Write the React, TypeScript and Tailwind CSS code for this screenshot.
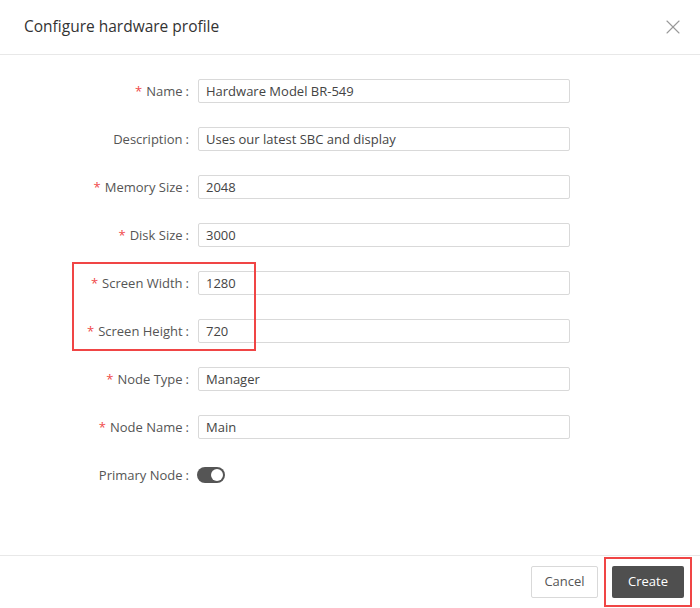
import { X } from "lucide-react";

const fields = [
  { label: "Name", value: "Hardware Model BR-549", required: true },
  { label: "Description", value: "Uses our latest SBC and display", required: false },
  { label: "Memory Size", value: "2048", required: true },
  { label: "Disk Size", value: "3000", required: true },
  { label: "Screen Width", value: "1280", required: true },
  { label: "Screen Height", value: "720", required: true },
  { label: "Node Type", value: "Manager", required: true },
  { label: "Node Name", value: "Main", required: true },
];

function Label({ text, required }: { text: string; required?: boolean }) {
  return (
    <div className="w-[190px] shrink-0 pt-[2px] text-right text-[13px] text-[#555]">
      {required && <span className="mr-[4px] text-[#f04a4a]">*</span>}
      {text}
      <span className="ml-[3px] mr-[1px]">:</span>
    </div>
  );
}

export default function App() {
  return (
    <div
      className="relative flex h-[608px] w-[700px] flex-col bg-white"
      style={{ fontFamily: '"Open Sans", "Noto Sans", sans-serif' }}
    >
      {/* Header */}
      <div className="flex h-[55px] shrink-0 items-center justify-between border-b border-[#e8e8e8] pl-6 pr-[15px]">
        <h1 className="text-[15.5px] font-normal text-[#333]">Configure hardware profile</h1>
        <X className="h-6 w-6 text-[#999]" strokeWidth={1.1} />
      </div>

      {/* Form */}
      <div className="relative flex flex-1 flex-col gap-6 pt-6">
        {fields.map((f) => (
          <div key={f.label} className="flex h-6 items-center">
            <Label text={f.label} required={f.required} />
            <div className="ml-[8px] flex h-6 w-[372px] items-center rounded-[2px] border border-[#d9d9d9] px-[7px] pt-[2px] text-[13px] text-[#444]">
              {f.value}
            </div>
          </div>
        ))}
        <div className="flex h-6 items-center">
          <Label text="Primary Node" />
          <div className="ml-[7px] flex h-[16px] w-[28px] items-center justify-end rounded-full bg-[#555] pr-[2px]">
            <div className="h-[12px] w-[12px] rounded-full bg-white" />
          </div>
        </div>

        {/* highlight around screen size fields */}
        <div className="pointer-events-none absolute left-[72px] top-[207px] h-[89px] w-[184px] border-2 border-[#f04545]" />
      </div>

      {/* Footer */}
      <div className="flex h-[53px] shrink-0 items-start justify-end gap-[14px] border-t border-[#e8e8e8] pr-4 pt-[10px]">
        <button className="h-8 w-[67px] rounded-[2px] border border-[#d9d9d9] bg-white text-[13px] text-[#555]">
          Cancel
        </button>
        <div className="relative">
          <button className="h-8 w-[72px] rounded-[2px] bg-[#4f4f4f] text-[13px] text-white">Create</button>
          <div className="pointer-events-none absolute -bottom-[9px] -left-[8px] -right-[8px] -top-[9px] border-2 border-[#f04545]" />
        </div>
      </div>
    </div>
  );
}
